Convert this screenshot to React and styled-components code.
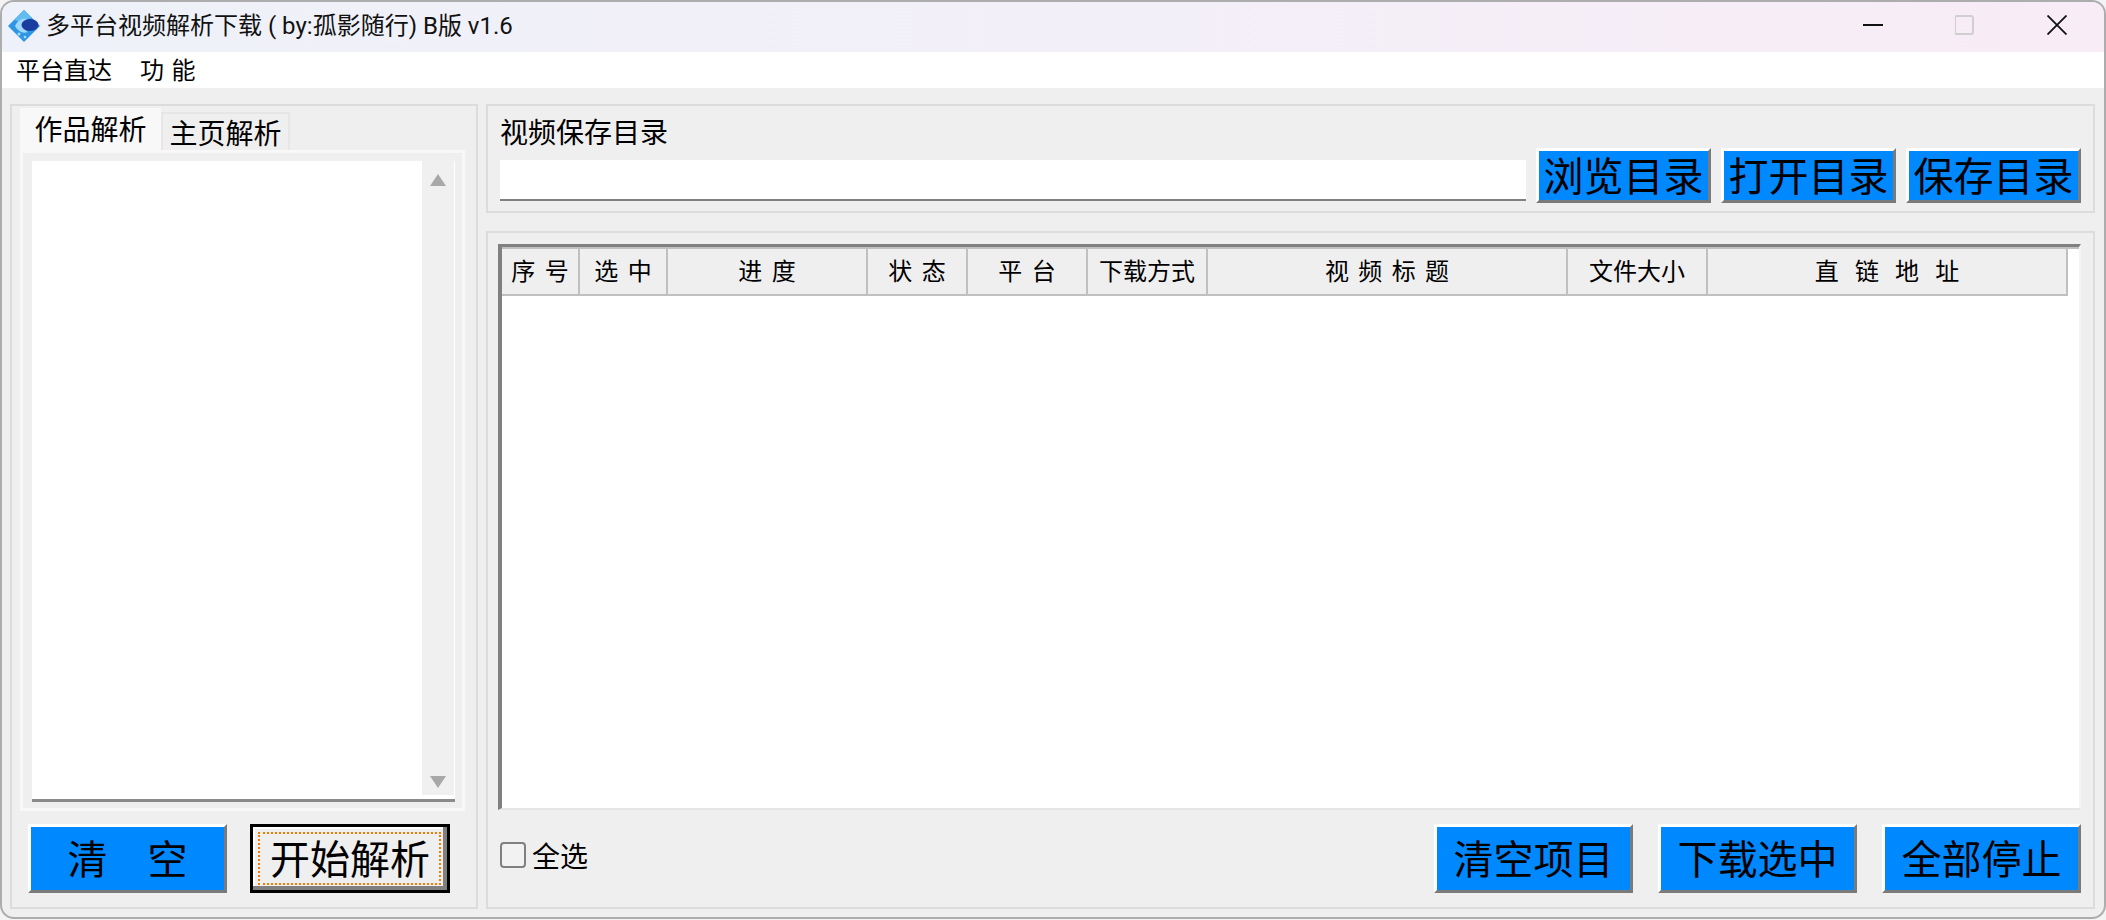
import styled, { createGlobalStyle } from "styled-components";

const COLUMNS = [
  { label: "序 号", width: 78 },
  { label: "选 中", width: 88 },
  { label: "进 度", width: 200 },
  { label: "状 态", width: 100 },
  { label: "平 台", width: 120 },
  { label: "下载方式", width: 120 },
  { label: "视 频 标 题", width: 360 },
  { label: "文件大小", width: 140 },
  { label: "直  链  地  址", width: 360, wordGap: 2.7 },
];

export default function App() {
  return (
    <>
      <GlobalStyle />
      <Desktop>
        <Window>
          <TitleBar>
            <TitleLeft>
              <svg width="34" height="34" viewBox="0 0 34 34">
                <defs>
                  <filter id="soft">
                    <feGaussianBlur stdDeviation="0.5" />
                  </filter>
                </defs>
                <g filter="url(#soft)">
                  <polygon points="16,1 32,17 16,33 0,17" fill="#2e96e4" />
                  <polygon points="16,1 24,9 10,12 6,11" fill="#62bcf2" />
                  <path d="M7 17 C10 10 16 9 20 10 C15 12 14 20 20 23 C14 25 10 22 7 17 Z" fill="#9fd8f8" />
                  <ellipse cx="22" cy="16" rx="8.5" ry="6" fill="#1a3ea0" />
                  <circle cx="11" cy="25" r="1.5" fill="#a8dcf8" />
                  <circle cx="17" cy="28" r="1.3" fill="#a8dcf8" />
                </g>
              </svg>
              <TitleText>多平台视频解析下载 ( by:孤影随行) B版 v1.6</TitleText>
            </TitleLeft>
            <WindowButtons>
              <svg width="20" height="20" viewBox="0 0 20 20">
                <line x1="0" y1="10" x2="20" y2="10" stroke="#111" strokeWidth="2" />
              </svg>
              <svg width="20" height="20" viewBox="0 0 20 20">
                <rect x="0" y="1" width="18" height="18" rx="2" fill="none" stroke="#cfcfcf" strokeWidth="2" />
              </svg>
              <svg width="20" height="20" viewBox="0 0 20 20">
                <path d="M0.5 0.5 L19.5 19.5 M19.5 0.5 L0.5 19.5" stroke="#111" strokeWidth="1.8" />
              </svg>
            </WindowButtons>
          </TitleBar>

          <MenuBar>
            <MenuItem>平台直达</MenuItem>
            <MenuItem>功 能</MenuItem>
          </MenuBar>

          <Content>
            <LeftGroup>
              <Tabs>
                <Tab $active>作品解析</Tab>
                <Tab>主页解析</Tab>
              </Tabs>
              <TabPanel>
                <TextBox>
                  <ScrollTrack>
                    <Arrow />
                    <Arrow $down />
                  </ScrollTrack>
                </TextBox>
              </TabPanel>
              <LeftActions>
                <ActionButton>清　空</ActionButton>
                <FocusButton>开始解析</FocusButton>
              </LeftActions>
            </LeftGroup>

            <RightColumn>
              <PathGroup>
                <PathLabel>视频保存目录</PathLabel>
                <PathInput />
                <PathButtons>
                  <DirButton>浏览目录</DirButton>
                  <DirButton>打开目录</DirButton>
                  <DirButton>保存目录</DirButton>
                </PathButtons>
              </PathGroup>

              <ListGroup>
                <ListTable>
                  <HeaderRow>
                    {COLUMNS.map((col) => (
                      <HeaderCell key={col.label} $width={col.width} $wordGap={col.wordGap ?? 4}>
                        {col.label}
                      </HeaderCell>
                    ))}
                  </HeaderRow>
                </ListTable>
                <Footer>
                  <CheckLabel>
                    <CheckBox />
                    全选
                  </CheckLabel>
                  <FooterButtons>
                    <ActionButton>清空项目</ActionButton>
                    <ActionButton>下载选中</ActionButton>
                    <ActionButton>全部停止</ActionButton>
                  </FooterButtons>
                </Footer>
              </ListGroup>
            </RightColumn>
          </Content>
        </Window>
      </Desktop>
    </>
  );
}

const GlobalStyle = createGlobalStyle`
  * {
    box-sizing: border-box;
  }
  html, body {
    margin: 0;
    padding: 0;
    height: 100%;
    background: #f3f3f3;
  }
  body {
    font-family: "Noto Sans CJK SC", "Noto Sans", sans-serif;
    color: #000;
  }
`;

const Desktop = styled.div`
  width: 100vw;
  height: 100vh;
  padding: 0 0 1px 0;
  overflow: hidden;
`;

const Window = styled.div`
  display: flex;
  flex-direction: column;
  height: 100%;
  background: #efefef;
  border: 2px solid #adadad;
  border-radius: 14px;
  overflow: hidden;
`;

const TitleBar = styled.div`
  display: flex;
  align-items: center;
  justify-content: space-between;
  height: 50px;
  flex: none;
  background: linear-gradient(90deg, #eef1f9, #f3eff8 55%, #f8ecf6);
`;

const TitleLeft = styled.div`
  display: flex;
  align-items: center;
  gap: 4px;
  padding: 0 0 2px 6px;
`;

const TitleText = styled.span`
  font-family: Roboto, "Noto Sans CJK SC", sans-serif;
  font-size: 24px;
  line-height: 46px;
  color: #111;
  white-space: pre;
`;

const WindowButtons = styled.div`
  display: flex;
  align-items: center;
  gap: 72px;
  padding: 0 37px 4px 0;
`;

const MenuBar = styled.div`
  display: flex;
  gap: 28px;
  align-items: center;
  height: 36px;
  flex: none;
  padding: 0 0 2px 14px;
  background: #fff;
`;

const MenuItem = styled.span`
  font-size: 24px;
  line-height: 34px;
  word-spacing: 2px;
`;

const Content = styled.div`
  display: flex;
  flex: 1;
  min-height: 0;
  gap: 8px;
  padding: 16px 9px 8px 8px;
`;

const LeftGroup = styled.div`
  display: flex;
  flex-direction: column;
  width: 468px;
  flex: none;
  padding: 2px 11px 0 8px;
  border: 2px solid #dcdcdc;
`;

const Tabs = styled.div`
  display: flex;
  align-items: flex-end;
  height: 42px;
  flex: none;
`;

const Tab = styled.div`
  font-size: 28px;
  line-height: 36px;
  text-align: center;
  height: ${(p) => (p.$active ? "42px" : "38px")};
  width: ${(p) => (p.$active ? "141px" : "129px")};
  background: ${(p) => (p.$active ? "#f8f8f8" : "#efefef")};
  border: 2px solid ${(p) => (p.$active ? "#f8f8f8" : "#e6e6e6")};
  border-bottom: none;
`;

const TabPanel = styled.div`
  height: 661px;
  flex: none;
  padding: 6px 7px 6px 9px;
  background: #efefef;
  border: 3px solid #f8f8f8;
`;

const TextBox = styled.div`
  display: flex;
  justify-content: flex-end;
  height: 100%;
  background: #fff;
  border-top: 2px solid #f0f0f0;
  border-bottom: 3px solid #8a8a8a;
  padding-right: 1px;
`;

const ScrollTrack = styled.div`
  display: flex;
  flex-direction: column;
  justify-content: space-between;
  align-items: center;
  width: 32px;
  padding: 13px 0 7px;
  margin-bottom: 4px;
  background: #f0f0f0;
`;

const Arrow = styled.div`
  width: 0;
  height: 0;
  border-left: 8px solid transparent;
  border-right: 8px solid transparent;
  ${(p) => (p.$down ? "border-top: 12px solid #a8a8a8;" : "border-bottom: 12px solid #a8a8a8;")}
`;

const LeftActions = styled.div`
  display: flex;
  justify-content: space-between;
  padding: 13px 15px 0 8px;
  width: 100%;
`;

const BlueButton = styled.button`
  display: flex;
  align-items: center;
  justify-content: center;
  padding: 0 0 4px;
  font-family: inherit;
  font-size: 40px;
  color: #000;
  background: #0088ff;
  border: 3px solid;
  border-color: #fff #7a7a7a #7a7a7a #fff;
`;

const ActionButton = styled(BlueButton)`
  width: 199px;
  height: 69px;
`;

const FocusButton = styled.button`
  position: relative;
  width: 200px;
  height: 69px;
  padding: 0 0 4px;
  font-family: inherit;
  font-size: 40px;
  color: #000;
  background: #efefef;
  border: 3px solid #000;
  box-shadow: inset -4px -4px 0 #808080, inset 2px 2px 0 #fff;

  &::after {
    content: "";
    position: absolute;
    inset: 5px 6px 5px 5px;
    border: 2px dotted #f57c00;
  }
`;

const RightColumn = styled.div`
  display: flex;
  flex-direction: column;
  flex: 1;
  min-width: 0;
  gap: 18px;
`;

const PathGroup = styled.div`
  display: grid;
  grid-template-columns: 1fr auto;
  grid-template-rows: auto auto;
  align-content: start;
  column-gap: 10px;
  height: 109px;
  flex: none;
  padding: 8px 12px 8px 12px;
  border: 2px solid #dcdcdc;
`;

const PathLabel = styled.div`
  font-size: 28px;
  line-height: 34px;
  height: 36px;
  margin-bottom: 8px;
`;

const PathInput = styled.div`
  grid-row: 2;
  height: 41px;
  background: #fff;
  border-bottom: 2px solid #808080;
`;

const PathButtons = styled.div`
  grid-column: 2;
  grid-row: 1 / span 2;
  align-self: start;
  margin-top: 34px;
  display: flex;
  gap: 10px;
`;

const DirButton = styled(BlueButton)`
  width: 175px;
  height: 55px;
`;

const ListGroup = styled.div`
  display: flex;
  flex-direction: column;
  flex: 1;
  min-height: 0;
  padding: 11px 12px 14px 10px;
  border: 2px solid #dcdcdc;
`;

const ListTable = styled.div`
  flex: 1;
  min-height: 0;
  background: #fff;
  border-top: 3px solid #808080;
  border-left: 4px solid #808080;
  border-right: 2px solid #f4f4f4;
  border-bottom: 2px solid #e6e6e6;
`;

const HeaderRow = styled.div`
  display: flex;
  border-top: 2px solid #c0c0c0;
`;

const HeaderCell = styled.div`
  width: ${(p) => p.$width}px;
  height: 47px;
  flex: none;
  font-size: 24px;
  line-height: 42px;
  text-align: center;
  white-space: pre;
  word-spacing: ${(p) => p.$wordGap}px;
  background: #efefef;
  border-right: 2px solid #c0c0c0;
  border-bottom: 2px solid #c0c0c0;
`;

const Footer = styled.div`
  display: flex;
  justify-content: space-between;
  align-items: center;
  padding-top: 14px;
  flex: none;
`;

const CheckLabel = styled.label`
  display: flex;
  align-items: center;
  gap: 6px;
  margin-left: 2px;
  margin-bottom: 7px;
  font-size: 28px;
`;

const CheckBox = styled.span`
  width: 26px;
  height: 26px;
  border: 2px solid #808080;
  border-radius: 4px;
  background: #f2f2f2;
`;

const FooterButtons = styled.div`
  display: flex;
  gap: 25px;
`;
